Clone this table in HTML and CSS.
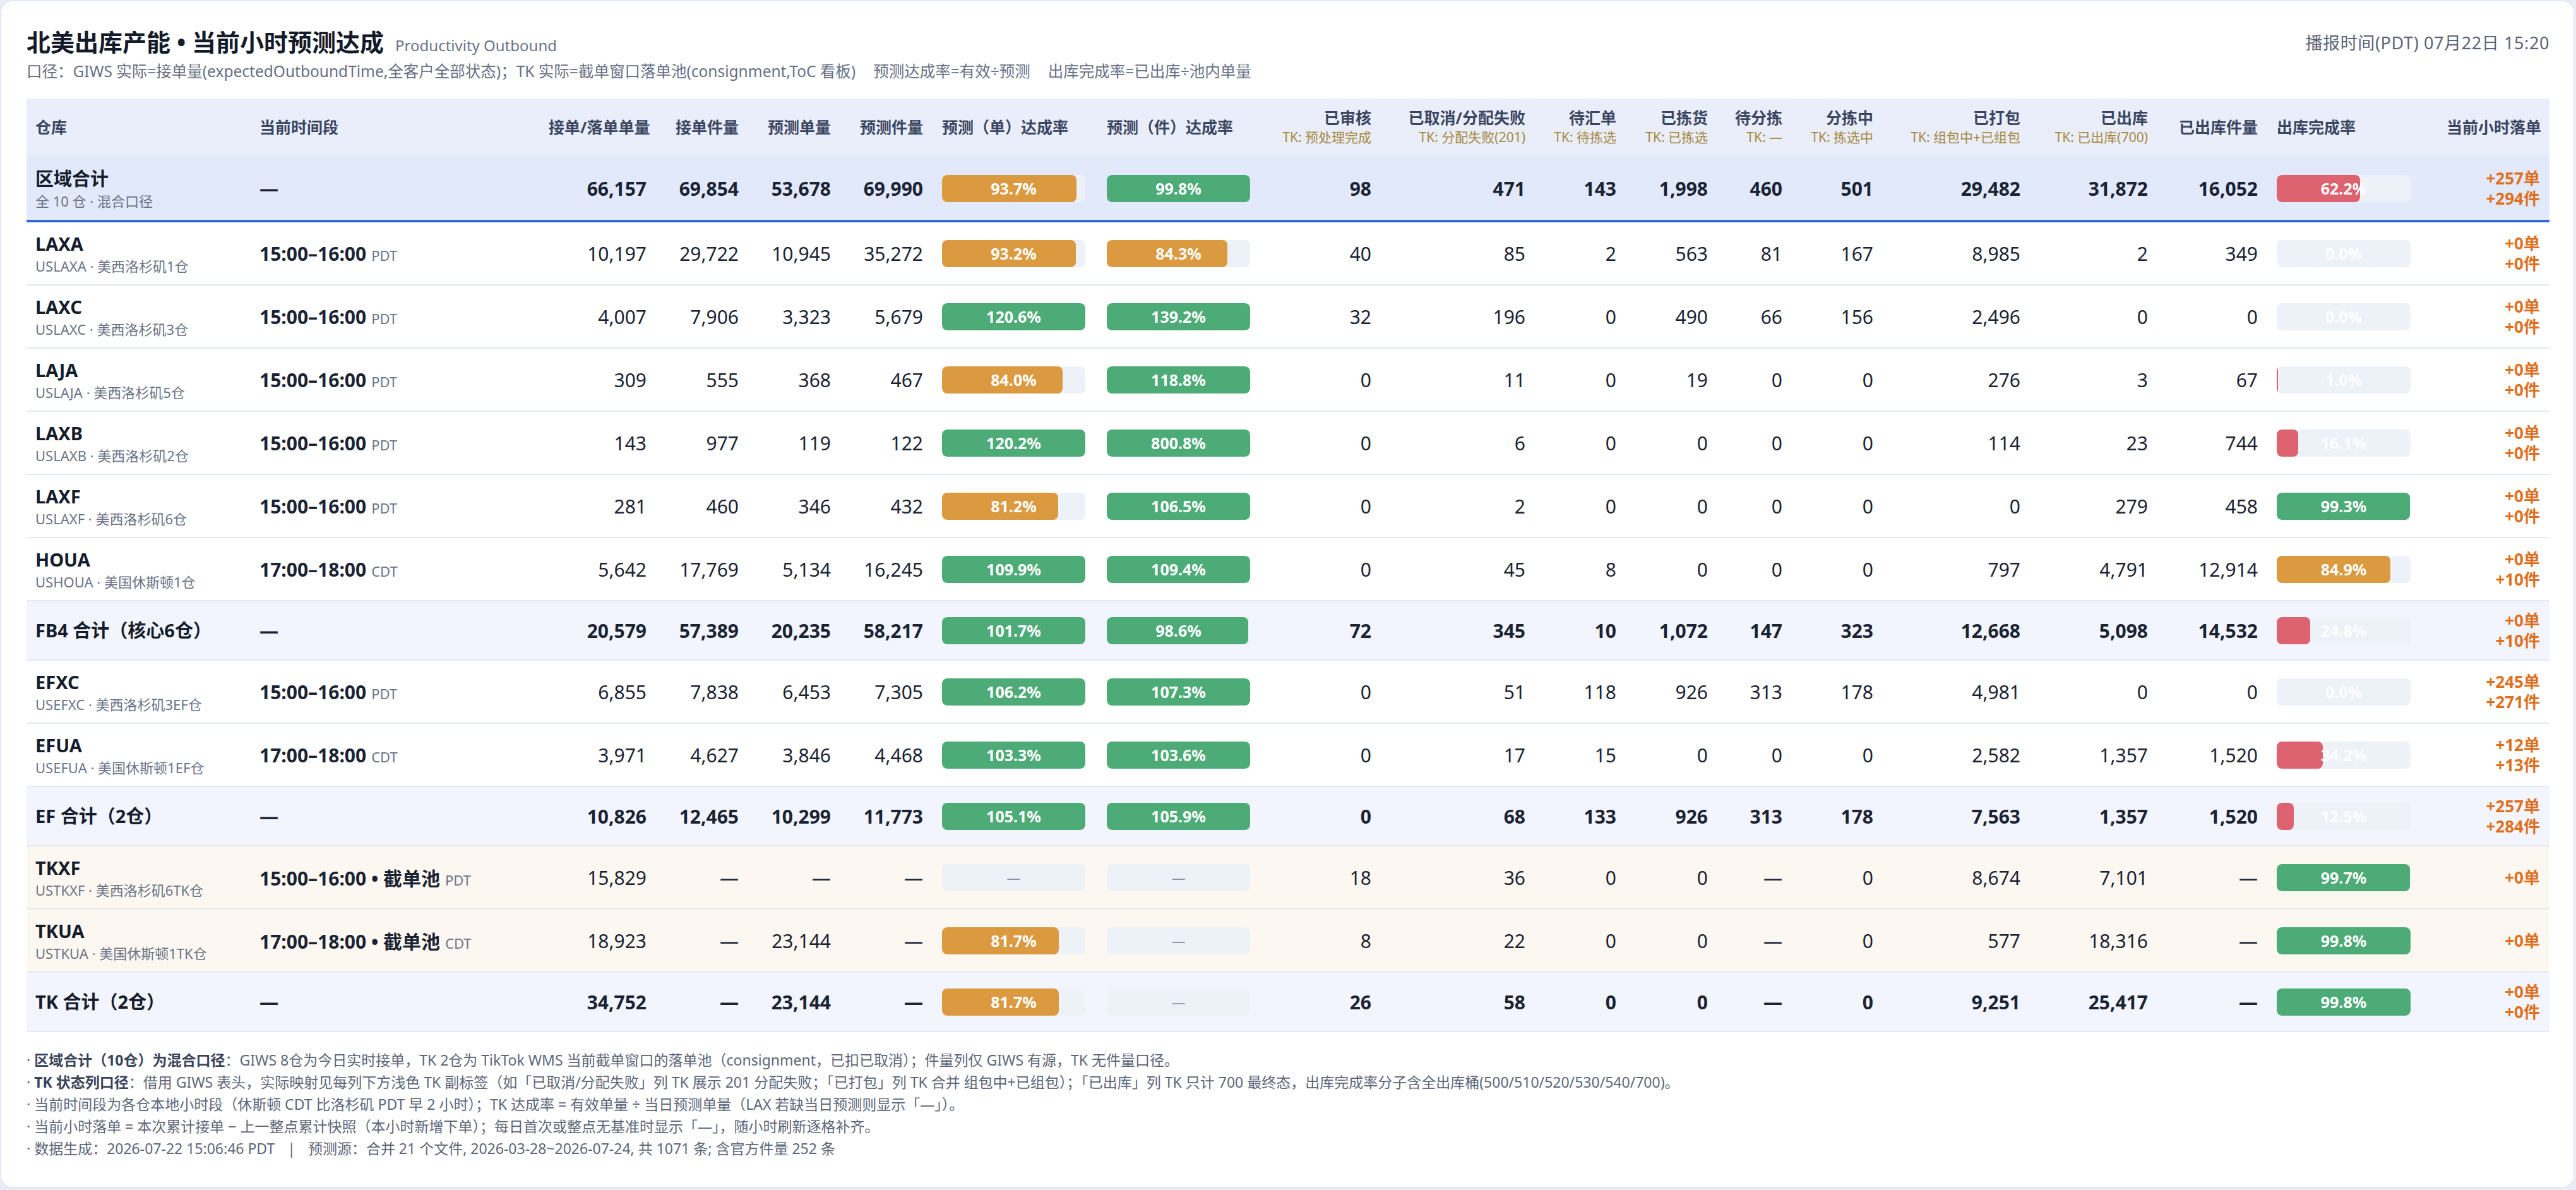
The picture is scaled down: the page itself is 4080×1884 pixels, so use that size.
FILE: index.html
```html
<!DOCTYPE html>
<html lang="zh-CN">
<head>
<meta charset="utf-8">
<title>北美出库产能 • 当前小时预测达成</title>
<link rel="stylesheet" href="styles.css">
</head>
<body>
<div class="card">
  <div class="top">
    <div class="title"><h1>北美出库产能 • 当前小时预测达成</h1><span class="en">Productivity Outbound</span></div>
    <div class="stamp">播报时间(PDT) 07月22日 15:20</div>
  </div>
  <div class="desc"><span>口径：GIWS 实际=接单量(expectedOutboundTime,全客户全部状态)；TK 实际=截单窗口落单池(consignment,ToC 看板)</span><span>预测达成率=有效÷预测</span><span>出库完成率=已出库÷池内单量</span></div>

  <div class="tbl">
    <div class="row head">
      <div class="h l">仓库</div>
      <div class="h l">当前时间段</div>
      <div class="h">接单/落单单量</div>
      <div class="h">接单件量</div>
      <div class="h">预测单量</div>
      <div class="h">预测件量</div>
      <div class="h l">预测（单）达成率</div>
      <div class="h l">预测（件）达成率</div>
      <div class="h">已审核<span class="s">TK: 预处理完成</span></div>
      <div class="h">已取消/分配失败<span class="s">TK: 分配失败(201)</span></div>
      <div class="h">待汇单<span class="s">TK: 待拣选</span></div>
      <div class="h">已拣货<span class="s">TK: 已拣选</span></div>
      <div class="h">待分拣<span class="s">TK: —</span></div>
      <div class="h">分拣中<span class="s">TK: 拣选中</span></div>
      <div class="h">已打包<span class="s">TK: 组包中+已组包</span></div>
      <div class="h">已出库<span class="s">TK: 已出库(700)</span></div>
      <div class="h">已出库件量</div>
      <div class="h l">出库完成率</div>
      <div class="h">当前小时落单</div>
    </div>

    <div class="row region">
      <div class="c l"><div class="code">区域合计</div><div class="loc">全 10 仓 · 混合口径</div></div>
      <div class="c l b">—</div>
      <div class="c b">66,157</div><div class="c b">69,854</div><div class="c b">53,678</div><div class="c b">69,990</div>
      <div class="c l"><div class="bar"><div class="fill o" style="width:93.7%"></div><span class="pct">93.7%</span></div></div>
      <div class="c l"><div class="bar"><div class="fill g" style="width:99.8%"></div><span class="pct">99.8%</span></div></div>
      <div class="c b">98</div><div class="c b">471</div><div class="c b">143</div><div class="c b">1,998</div><div class="c b">460</div><div class="c b">501</div><div class="c b">29,482</div><div class="c b">31,872</div><div class="c b">16,052</div>
      <div class="c l"><div class="bar w"><div class="fill r" style="width:62.2%"></div><span class="pct">62.2%</span></div></div>
      <div class="c inc">+257单<br>+294件</div>
    </div>

    <div class="row">
      <div class="c l"><div class="code">LAXA</div><div class="loc">USLAXA · 美西洛杉矶1仓</div></div>
      <div class="c l"><span class="time">15:00–16:00</span><span class="tz">PDT</span></div>
      <div class="c">10,197</div><div class="c">29,722</div><div class="c">10,945</div><div class="c">35,272</div>
      <div class="c l"><div class="bar"><div class="fill o" style="width:93.2%"></div><span class="pct">93.2%</span></div></div>
      <div class="c l"><div class="bar"><div class="fill o" style="width:84.3%"></div><span class="pct">84.3%</span></div></div>
      <div class="c">40</div><div class="c">85</div><div class="c">2</div><div class="c">563</div><div class="c">81</div><div class="c">167</div><div class="c">8,985</div><div class="c">2</div><div class="c">349</div>
      <div class="c l"><div class="bar w"><span class="pct">0.0%</span></div></div>
      <div class="c inc">+0单<br>+0件</div>
    </div>

    <div class="row">
      <div class="c l"><div class="code">LAXC</div><div class="loc">USLAXC · 美西洛杉矶3仓</div></div>
      <div class="c l"><span class="time">15:00–16:00</span><span class="tz">PDT</span></div>
      <div class="c">4,007</div><div class="c">7,906</div><div class="c">3,323</div><div class="c">5,679</div>
      <div class="c l"><div class="bar"><div class="fill g" style="width:100%"></div><span class="pct">120.6%</span></div></div>
      <div class="c l"><div class="bar"><div class="fill g" style="width:100%"></div><span class="pct">139.2%</span></div></div>
      <div class="c">32</div><div class="c">196</div><div class="c">0</div><div class="c">490</div><div class="c">66</div><div class="c">156</div><div class="c">2,496</div><div class="c">0</div><div class="c">0</div>
      <div class="c l"><div class="bar w"><span class="pct">0.0%</span></div></div>
      <div class="c inc">+0单<br>+0件</div>
    </div>

    <div class="row">
      <div class="c l"><div class="code">LAJA</div><div class="loc">USLAJA · 美西洛杉矶5仓</div></div>
      <div class="c l"><span class="time">15:00–16:00</span><span class="tz">PDT</span></div>
      <div class="c">309</div><div class="c">555</div><div class="c">368</div><div class="c">467</div>
      <div class="c l"><div class="bar"><div class="fill o" style="width:84.0%"></div><span class="pct">84.0%</span></div></div>
      <div class="c l"><div class="bar"><div class="fill g" style="width:100%"></div><span class="pct">118.8%</span></div></div>
      <div class="c">0</div><div class="c">11</div><div class="c">0</div><div class="c">19</div><div class="c">0</div><div class="c">0</div><div class="c">276</div><div class="c">3</div><div class="c">67</div>
      <div class="c l"><div class="bar w"><div class="fill r" style="width:1.0%"></div><span class="pct">1.0%</span></div></div>
      <div class="c inc">+0单<br>+0件</div>
    </div>

    <div class="row">
      <div class="c l"><div class="code">LAXB</div><div class="loc">USLAXB · 美西洛杉矶2仓</div></div>
      <div class="c l"><span class="time">15:00–16:00</span><span class="tz">PDT</span></div>
      <div class="c">143</div><div class="c">977</div><div class="c">119</div><div class="c">122</div>
      <div class="c l"><div class="bar"><div class="fill g" style="width:100%"></div><span class="pct">120.2%</span></div></div>
      <div class="c l"><div class="bar"><div class="fill g" style="width:100%"></div><span class="pct">800.8%</span></div></div>
      <div class="c">0</div><div class="c">6</div><div class="c">0</div><div class="c">0</div><div class="c">0</div><div class="c">0</div><div class="c">114</div><div class="c">23</div><div class="c">744</div>
      <div class="c l"><div class="bar w"><div class="fill r" style="width:16.1%"></div><span class="pct">16.1%</span></div></div>
      <div class="c inc">+0单<br>+0件</div>
    </div>

    <div class="row">
      <div class="c l"><div class="code">LAXF</div><div class="loc">USLAXF · 美西洛杉矶6仓</div></div>
      <div class="c l"><span class="time">15:00–16:00</span><span class="tz">PDT</span></div>
      <div class="c">281</div><div class="c">460</div><div class="c">346</div><div class="c">432</div>
      <div class="c l"><div class="bar"><div class="fill o" style="width:81.2%"></div><span class="pct">81.2%</span></div></div>
      <div class="c l"><div class="bar"><div class="fill g" style="width:100%"></div><span class="pct">106.5%</span></div></div>
      <div class="c">0</div><div class="c">2</div><div class="c">0</div><div class="c">0</div><div class="c">0</div><div class="c">0</div><div class="c">0</div><div class="c">279</div><div class="c">458</div>
      <div class="c l"><div class="bar w"><div class="fill g" style="width:99.3%"></div><span class="pct">99.3%</span></div></div>
      <div class="c inc">+0单<br>+0件</div>
    </div>

    <div class="row">
      <div class="c l"><div class="code">HOUA</div><div class="loc">USHOUA · 美国休斯顿1仓</div></div>
      <div class="c l"><span class="time">17:00–18:00</span><span class="tz">CDT</span></div>
      <div class="c">5,642</div><div class="c">17,769</div><div class="c">5,134</div><div class="c">16,245</div>
      <div class="c l"><div class="bar"><div class="fill g" style="width:100%"></div><span class="pct">109.9%</span></div></div>
      <div class="c l"><div class="bar"><div class="fill g" style="width:100%"></div><span class="pct">109.4%</span></div></div>
      <div class="c">0</div><div class="c">45</div><div class="c">8</div><div class="c">0</div><div class="c">0</div><div class="c">0</div><div class="c">797</div><div class="c">4,791</div><div class="c">12,914</div>
      <div class="c l"><div class="bar w"><div class="fill o" style="width:84.9%"></div><span class="pct">84.9%</span></div></div>
      <div class="c inc">+0单<br>+10件</div>
    </div>

    <div class="row sub">
      <div class="c l"><div class="code">FB4 合计（核心6仓）</div></div>
      <div class="c l b">—</div>
      <div class="c b">20,579</div><div class="c b">57,389</div><div class="c b">20,235</div><div class="c b">58,217</div>
      <div class="c l"><div class="bar"><div class="fill g" style="width:100%"></div><span class="pct">101.7%</span></div></div>
      <div class="c l"><div class="bar"><div class="fill g" style="width:98.6%"></div><span class="pct">98.6%</span></div></div>
      <div class="c b">72</div><div class="c b">345</div><div class="c b">10</div><div class="c b">1,072</div><div class="c b">147</div><div class="c b">323</div><div class="c b">12,668</div><div class="c b">5,098</div><div class="c b">14,532</div>
      <div class="c l"><div class="bar w"><div class="fill r" style="width:24.8%"></div><span class="pct">24.8%</span></div></div>
      <div class="c inc">+0单<br>+10件</div>
    </div>

    <div class="row">
      <div class="c l"><div class="code">EFXC</div><div class="loc">USEFXC · 美西洛杉矶3EF仓</div></div>
      <div class="c l"><span class="time">15:00–16:00</span><span class="tz">PDT</span></div>
      <div class="c">6,855</div><div class="c">7,838</div><div class="c">6,453</div><div class="c">7,305</div>
      <div class="c l"><div class="bar"><div class="fill g" style="width:100%"></div><span class="pct">106.2%</span></div></div>
      <div class="c l"><div class="bar"><div class="fill g" style="width:100%"></div><span class="pct">107.3%</span></div></div>
      <div class="c">0</div><div class="c">51</div><div class="c">118</div><div class="c">926</div><div class="c">313</div><div class="c">178</div><div class="c">4,981</div><div class="c">0</div><div class="c">0</div>
      <div class="c l"><div class="bar w"><span class="pct">0.0%</span></div></div>
      <div class="c inc">+245单<br>+271件</div>
    </div>

    <div class="row">
      <div class="c l"><div class="code">EFUA</div><div class="loc">USEFUA · 美国休斯顿1EF仓</div></div>
      <div class="c l"><span class="time">17:00–18:00</span><span class="tz">CDT</span></div>
      <div class="c">3,971</div><div class="c">4,627</div><div class="c">3,846</div><div class="c">4,468</div>
      <div class="c l"><div class="bar"><div class="fill g" style="width:100%"></div><span class="pct">103.3%</span></div></div>
      <div class="c l"><div class="bar"><div class="fill g" style="width:100%"></div><span class="pct">103.6%</span></div></div>
      <div class="c">0</div><div class="c">17</div><div class="c">15</div><div class="c">0</div><div class="c">0</div><div class="c">0</div><div class="c">2,582</div><div class="c">1,357</div><div class="c">1,520</div>
      <div class="c l"><div class="bar w"><div class="fill r" style="width:34.2%"></div><span class="pct">34.2%</span></div></div>
      <div class="c inc">+12单<br>+13件</div>
    </div>

    <div class="row sub">
      <div class="c l"><div class="code">EF 合计（2仓）</div></div>
      <div class="c l b">—</div>
      <div class="c b">10,826</div><div class="c b">12,465</div><div class="c b">10,299</div><div class="c b">11,773</div>
      <div class="c l"><div class="bar"><div class="fill g" style="width:100%"></div><span class="pct">105.1%</span></div></div>
      <div class="c l"><div class="bar"><div class="fill g" style="width:100%"></div><span class="pct">105.9%</span></div></div>
      <div class="c b">0</div><div class="c b">68</div><div class="c b">133</div><div class="c b">926</div><div class="c b">313</div><div class="c b">178</div><div class="c b">7,563</div><div class="c b">1,357</div><div class="c b">1,520</div>
      <div class="c l"><div class="bar w"><div class="fill r" style="width:12.5%"></div><span class="pct">12.5%</span></div></div>
      <div class="c inc">+257单<br>+284件</div>
    </div>

    <div class="row tk">
      <div class="c l"><div class="code">TKXF</div><div class="loc">USTKXF · 美西洛杉矶6TK仓</div></div>
      <div class="c l"><span class="time">15:00–16:00 • 截单池</span><span class="tz">PDT</span></div>
      <div class="c">15,829</div><div class="c">—</div><div class="c">—</div><div class="c">—</div>
      <div class="c l"><div class="bar"><span class="pct na">—</span></div></div>
      <div class="c l"><div class="bar"><span class="pct na">—</span></div></div>
      <div class="c">18</div><div class="c">36</div><div class="c">0</div><div class="c">0</div><div class="c">—</div><div class="c">0</div><div class="c">8,674</div><div class="c">7,101</div><div class="c">—</div>
      <div class="c l"><div class="bar w"><div class="fill g" style="width:99.7%"></div><span class="pct">99.7%</span></div></div>
      <div class="c inc">+0单</div>
    </div>

    <div class="row tk">
      <div class="c l"><div class="code">TKUA</div><div class="loc">USTKUA · 美国休斯顿1TK仓</div></div>
      <div class="c l"><span class="time">17:00–18:00 • 截单池</span><span class="tz">CDT</span></div>
      <div class="c">18,923</div><div class="c">—</div><div class="c">23,144</div><div class="c">—</div>
      <div class="c l"><div class="bar"><div class="fill o" style="width:81.7%"></div><span class="pct">81.7%</span></div></div>
      <div class="c l"><div class="bar"><span class="pct na">—</span></div></div>
      <div class="c">8</div><div class="c">22</div><div class="c">0</div><div class="c">0</div><div class="c">—</div><div class="c">0</div><div class="c">577</div><div class="c">18,316</div><div class="c">—</div>
      <div class="c l"><div class="bar w"><div class="fill g" style="width:99.8%"></div><span class="pct">99.8%</span></div></div>
      <div class="c inc">+0单</div>
    </div>

    <div class="row sub">
      <div class="c l"><div class="code">TK 合计（2仓）</div></div>
      <div class="c l b">—</div>
      <div class="c b">34,752</div><div class="c b">—</div><div class="c b">23,144</div><div class="c b">—</div>
      <div class="c l"><div class="bar"><div class="fill o" style="width:81.7%"></div><span class="pct">81.7%</span></div></div>
      <div class="c l"><div class="bar"><span class="pct na">—</span></div></div>
      <div class="c b">26</div><div class="c b">58</div><div class="c b">0</div><div class="c b">0</div><div class="c b">—</div><div class="c b">0</div><div class="c b">9,251</div><div class="c b">25,417</div><div class="c b">—</div>
      <div class="c l"><div class="bar w"><div class="fill g" style="width:99.8%"></div><span class="pct">99.8%</span></div></div>
      <div class="c inc">+0单<br>+0件</div>
    </div>
  </div>

  <div class="notes">
    <div>· <b>区域合计（10仓）为混合口径</b>：GIWS 8仓为今日实时接单，TK 2仓为 TikTok WMS 当前截单窗口的落单池（consignment，已扣已取消）；件量列仅 GIWS 有源，TK 无件量口径。</div>
    <div>· <b>TK 状态列口径</b>：借用 GIWS 表头，实际映射见每列下方浅色 TK 副标签（如「已取消/分配失败」列 TK 展示 201 分配失败；「已打包」列 TK 合并 组包中+已组包）；「已出库」列 TK 只计 700 最终态，出库完成率分子含全出库桶(500/510/520/530/540/700)。</div>
    <div>· 当前时间段为各仓本地小时段（休斯顿 CDT 比洛杉矶 PDT 早 2 小时）；TK 达成率 = 有效单量 ÷ 当日预测单量（LAX 若缺当日预测则显示「—」）。</div>
    <div>· 当前小时落单 = 本次累计接单 − 上一整点累计快照（本小时新增下单）；每日首次或整点无基准时显示「—」，随小时刷新逐格补齐。</div>
    <div>· 数据生成：2026-07-22 15:06:46 PDT <span class="sep">|</span> 预测源：合并 21 个文件, 2026-03-28~2026-07-24, 共 1071 条; 含官方件量 252 条</div>
  </div>
</div>
</body>
</html>
```

FILE: styles.css
```css
* { box-sizing: border-box; }
html, body { margin: 0; }
body {
  background: #e8ecf4;
  padding: 2px 4px 4px 2px;
  font-family: "Noto Sans", "Noto Sans CJK SC", sans-serif;
  color: #1b2333;
}
.card {
  background: #fff;
  border-radius: 18px;
  padding: 40px 38px 30px 40px;
  min-height: 1877px;
  box-shadow: 0 0 0 1px #dfe4ee;
}
.top {
  display: flex;
  justify-content: space-between;
  align-items: center;
  height: 48px;
}
.title { display: flex; align-items: baseline; }
h1 {
  margin: 0;
  font-size: 38px;
  line-height: 48px;
  font-weight: 700;
  color: #131a2a;
}
.en { font-size: 24px; color: #6b7385; margin-left: 18px; }
.stamp { font-size: 27px; letter-spacing: 0.6px; color: #5b6477; }
.desc {
  margin-top: 6px;
  font-size: 24.5px;
  line-height: 34px;
  color: #687084;
  display: flex;
  gap: 28px;
}
.tbl { margin-top: 26px; }
.row {
  display: grid;
  grid-template-columns: 354px 458px 185px 146px 146px 146px 261px 260px 189px 244px 144px 145px 118px 144px 233px 202px 174px 269px 178px;
  align-items: center;
  height: 100px;
  border-bottom: 2px solid #e4e8f0;
}
.head { height: 92px; background: #eaeefa; }
.region { height: 104px; background: #e2e9fa; border-bottom: 4px solid #2f66da; }
.sub { height: 94px; background: #f2f5fd; }
.tk { background: #fcf8f1; }
.h {
  font-size: 25px;
  line-height: 32px;
  font-weight: 700;
  color: #3a4661;
  padding: 0 15px;
  text-align: right;
  white-space: nowrap;
}
.h:first-child { padding-left: 14px; }
.h .s {
  display: block;
  font-size: 21px;
  line-height: 31px;
  font-weight: 400;
  color: #a5893f;
}
.c {
  padding: 0 15px;
  text-align: right;
  font-size: 30px;
  white-space: nowrap;
  color: #1b2333;
}
.c:first-child { padding-left: 14px; }
.l { text-align: left; }
.b { font-weight: 700; }
.code { font-size: 29px; line-height: 40px; font-weight: 700; color: #151c2c; }
.loc { font-size: 22px; line-height: 30px; color: #6b7386; }
.time { font-size: 30px; font-weight: 700; }
.tz { font-size: 22px; color: #6b7386; margin-left: 8px; }
.bar {
  position: relative;
  width: 227px;
  height: 43px;
  border-radius: 8px;
  background: #edf1f8;
  overflow: hidden;
}
.bar.w { width: 212px; }
.fill { position: absolute; left: 0; top: 0; bottom: 0; border-radius: 8px; }
.g { background: #4cab77; }
.o { background: #db9a40; }
.r { background: #dd6371; }
.pct {
  position: relative;
  display: block;
  text-align: center;
  line-height: 43px;
  font-size: 25px;
  font-weight: 700;
  color: #fff;
}
.pct.na { color: #8a93a6; font-size: 22px; font-weight: 400; }
.inc { font-size: 26px; line-height: 32px; font-weight: 700; color: #e06f1d; }
.notes {
  margin-top: 27px;
  font-size: 23px;
  line-height: 35px;
  color: #5d6678;
}
.notes b { color: #3a4458; }
.sep { margin: 0 14px; }
```
